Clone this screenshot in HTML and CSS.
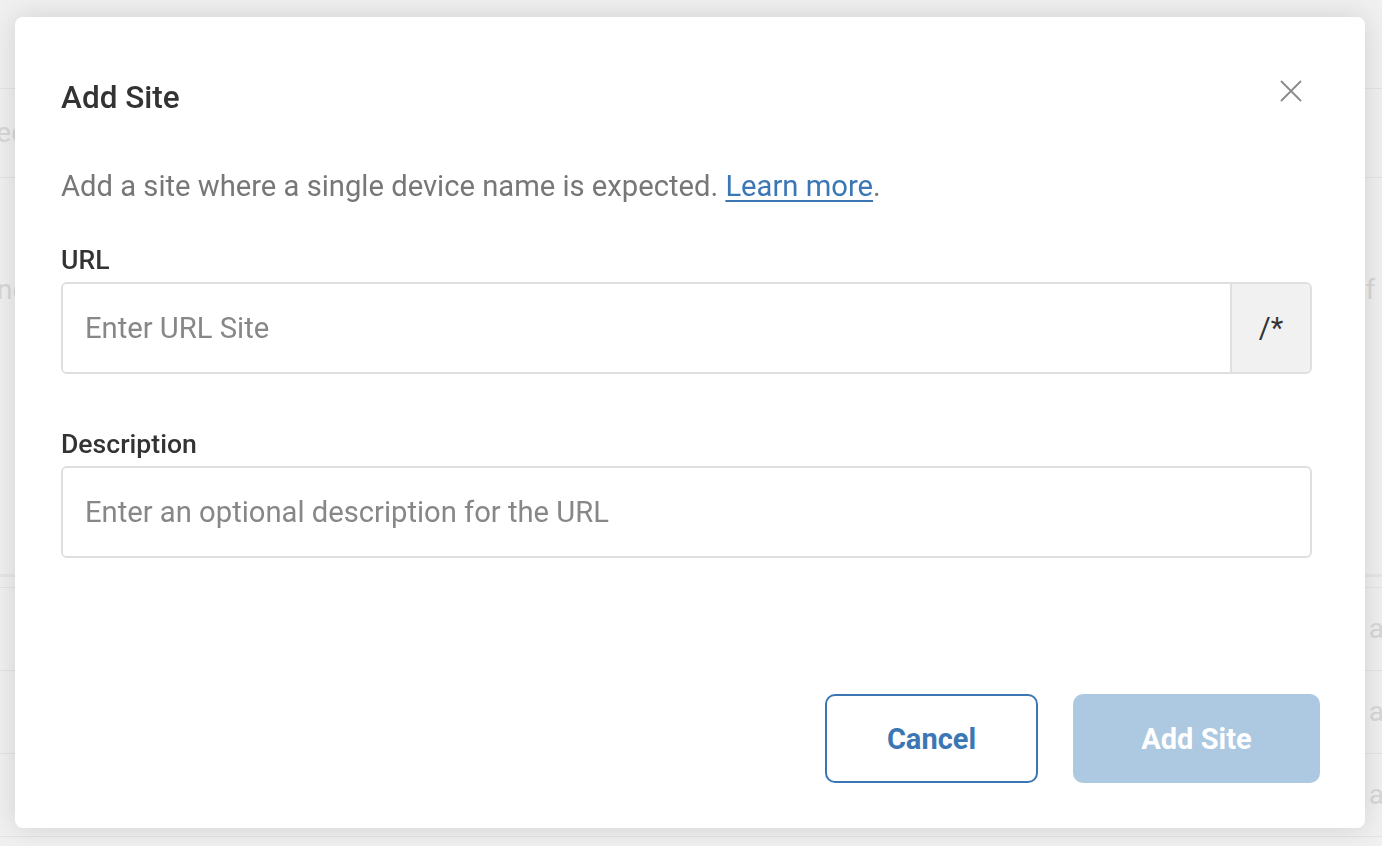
FILE: index.html
```html
<!DOCTYPE html>
<html lang="en">
<head>
<meta charset="utf-8">
<title>Add Site</title>
<link rel="stylesheet" href="styles.css">
</head>
<body>
<div class="page">
  <div class="bg-rule"></div>
  <div class="bg-row bg-row-top"><span class="bg-text bg-left-1">Selected</span></div>
  <div class="bg-rule"></div>
  <div class="bg-row bg-row-mid">
    <span class="bg-text bg-left-2">one</span>
    <span class="bg-text bg-right-2">of your</span>
  </div>
  <div class="bg-rule thick"></div>
  <div class="bg-gap"></div>
  <div class="bg-rule"></div>
  <div class="bg-row bg-row-item"><span class="bg-check"></span><span class="bg-text bg-right">a</span></div>
  <div class="bg-rule"></div>
  <div class="bg-row bg-row-item"><span class="bg-check"></span><span class="bg-text bg-right">a</span></div>
  <div class="bg-rule"></div>
  <div class="bg-row bg-row-item"><span class="bg-check"></span><span class="bg-text bg-right">a</span></div>
  <div class="bg-rule"></div>
</div>

<div class="overlay">
  <div class="modal" role="dialog" aria-labelledby="modal-title">
    <div class="modal-header">
      <h2 class="modal-title" id="modal-title">Add Site</h2>
      <button class="close-btn" aria-label="Close">
        <svg width="22" height="22" viewBox="0 0 22 22"><path d="M1 1 L21 21 M21 1 L1 21" stroke="#8a8a8a" stroke-width="1.8" fill="none"/></svg>
      </button>
    </div>
    <div class="modal-body">
      <p class="modal-desc">Add a site where a single device name is expected. <a href="#" class="link">Learn more</a>.</p>
      <label class="field-label label-url" for="url">URL</label>
      <div class="input-group">
        <input id="url" class="text-input" type="text" placeholder="Enter URL Site">
        <span class="input-suffix">/*</span>
      </div>
      <label class="field-label label-desc" for="desc">Description</label>
      <div class="input-group">
        <input id="desc" class="text-input" type="text" placeholder="Enter an optional description for the URL">
      </div>
    </div>
    <div class="modal-footer">
      <button class="btn btn-outline">Cancel</button>
      <button class="btn btn-primary" disabled>Add Site</button>
    </div>
  </div>
</div>
</body>
</html>
```
FILE: styles.css
```css
* { box-sizing: border-box; }

html, body {
  margin: 0;
  padding: 0;
  height: 100%;
  overflow: hidden;
}

body {
  background: #f0f0f0;
  font-family: Roboto, "Liberation Sans", Arial, sans-serif;
}

/* faded page behind the dialog */
.page {
  padding-top: 88px;
  overflow: hidden;
}
.bg-rule {
  height: 1px;
  background: #e3e3e3;
}
.bg-rule.thick {
  height: 3px;
  background: #e6e6e6;
}
.bg-row {
  display: flex;
  align-items: center;
  justify-content: space-between;
}
.bg-row-top { height: 88px; }
.bg-row-mid { height: 396px; align-items: flex-start; padding-top: 96px; }
.bg-gap { height: 10px; }
.bg-row-item { height: 82px; }
.bg-text {
  font-size: 28px;
  color: #d7d7d7;
  line-height: 32px;
  white-space: nowrap;
}
.bg-left-1 { margin-left: -42px; }
.bg-left-2 { margin-left: -19px; }
.bg-right-2 { margin-right: -54px; }
.bg-right { margin-right: -2px; }
.bg-check {
  width: 16px;
  height: 12px;
  margin-left: 2px;
  border-right: 2px solid #d8d8d8;
}

/* overlay + dialog */
.overlay {
  position: fixed;
  inset: 0;
  padding: 17px 17px 18px 15px;
}
.modal {
  width: 1350px;
  height: 811px;
  background: #fff;
  border-radius: 8px;
  box-shadow: 0 0 28px rgba(0, 0, 0, 0.13);
  padding: 61px 45px 45px 46px;
  display: flex;
  flex-direction: column;
}

.modal-header {
  display: flex;
  justify-content: space-between;
  align-items: flex-start;
}
.modal-title {
  margin: 0;
  font-size: 31.5px;
  line-height: 40px;
  font-weight: 500;
  color: #333;
}
.close-btn {
  margin: 2px 18px 0 0;
  padding: 0;
  border: 0;
  background: none;
  width: 22px;
  height: 22px;
  display: flex;
  cursor: pointer;
}

.modal-body {
  display: flex;
  flex-direction: column;
  margin-right: 8px;
}
.modal-desc {
  margin: 48px 0 0;
  font-size: 29.2px;
  line-height: 40px;
  color: #777;
}
.link {
  color: #3a77b4;
  text-decoration: underline;
  text-decoration-thickness: 2px;
  text-underline-offset: 4px;
}
.field-label {
  display: block;
  font-size: 26.6px;
  line-height: 32px;
  font-weight: 500;
  color: #333;
  margin-bottom: 6px;
}
.label-url { margin-top: 38px; }
.label-desc { margin-top: 54px; }

.input-group {
  display: flex;
  height: 92px;
  border: 2px solid #dfdfdf;
  border-radius: 6px;
  overflow: hidden;
}
.text-input {
  flex: 1;
  min-width: 0;
  border: 0;
  outline: none;
  padding: 0 22px;
  font-family: Roboto, "Liberation Sans", Arial, sans-serif;
  font-size: 29.2px;
  color: #333;
  background: #fff;
}
.text-input::placeholder {
  color: #878787;
  opacity: 1;
}
.input-suffix {
  width: 80px;
  display: flex;
  align-items: center;
  justify-content: center;
  background: #f1f1f1;
  border-left: 2px solid #e0e0e0;
  font-size: 29px;
  color: #333;
}

.modal-footer {
  margin-top: auto;
  display: flex;
  justify-content: flex-end;
  gap: 35px;
}
.btn {
  height: 89px;
  border-radius: 10px;
  font-family: Roboto, "Liberation Sans", Arial, sans-serif;
  font-size: 29px;
  font-weight: 700;
  cursor: pointer;
}
.btn-outline {
  width: 213px;
  background: #fff;
  border: 2px solid #3a77b4;
  color: #3a77b4;
}
.btn-primary {
  width: 247px;
  background: #adc8e1;
  border: 0;
  color: #fff;
}
```
